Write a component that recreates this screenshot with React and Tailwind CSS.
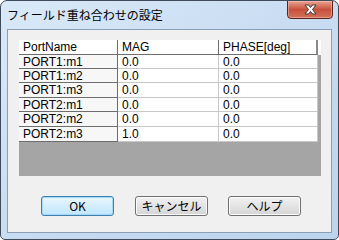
import React from "react";

const rows = [
  { name: "PORT1:m1", mag: "0.0", ph: "0.0", h: "h-[14px]" },
  { name: "PORT1:m2", mag: "0.0", ph: "0.0", h: "h-[14px]" },
  { name: "PORT1:m3", mag: "0.0", ph: "0.0", h: "h-[15px]" },
  { name: "PORT2:m1", mag: "0.0", ph: "0.0", h: "h-[14px]" },
  { name: "PORT2:m2", mag: "0.0", ph: "0.0", h: "h-[15px]" },
  { name: "PORT2:m3", mag: "1.0", ph: "0.0", h: "h-[15px]" },
];

const gridFont = { fontFamily: '"Liberation Sans", Arial, sans-serif' };

function Btn({ children, primary }) {
  return (
    <div
      className={
        "w-[73px] h-[20px] rounded-[3px] flex items-center justify-center text-[12px] text-black " +
        (primary
          ? "border border-[#3c7fb1] bg-gradient-to-b from-[#eaf6fd] to-[#bee6fd] shadow-[inset_0_0_0_1px_#a7d9f5]"
          : "border border-[#707070] bg-gradient-to-b from-[#f2f2f2] to-[#d5d5d5] shadow-[inset_0_0_0_1px_#fcfcfc]")
      }
      style={{ fontFamily: '"Noto Sans CJK JP", "Liberation Sans", sans-serif' }}
    >
      {children}
    </div>
  );
}

export default function App() {
  return (
    <div className="w-[339px] h-[240px] bg-white">
      <div className="w-[339px] h-[240px] rounded-t-[7px] rounded-b-[5px] border border-[#3f4b5a] bg-gradient-to-br from-[#d9e9f8] via-[#c8dcf2] to-[#bcd4ee] flex flex-col overflow-hidden">
        {/* title bar */}
        <div className="h-[28px] flex items-start shrink-0">
          <div
            className="pl-[6px] pt-[6px] text-[12px] leading-[16px] text-black"
            style={{ fontFamily: '"Noto Sans CJK JP", sans-serif' }}
          >
            フィールド重ね合わせの設定
          </div>
          <div className="ml-auto mr-[5px] w-[46px] h-[19px] -mt-px rounded-b-[4px] border border-[#5b2219] bg-gradient-to-b from-[#e8a493] via-[#c7503c] to-[#d2725a] flex items-center justify-center shadow-[inset_0_0_0_1px_rgba(255,200,190,0.5)]">
            <svg width="15" height="11" viewBox="0 0 15 11">
              <path
                d="M2 1 L5.5 1 L7.5 3.5 L9.5 1 L13 1 L9.5 5.5 L13 10 L9.5 10 L7.5 7.5 L5.5 10 L2 10 L5.5 5.5 Z"
                fill="#ffffff"
                stroke="#3a3a3a"
                strokeWidth="1"
                strokeLinejoin="round"
              />
            </svg>
          </div>
        </div>
        {/* client area */}
        <div className="mx-[6px] h-[204px] border border-[#8b9eb5] bg-[#f0f0f0] flex flex-col">
          <div className="ml-[11px] mt-[10px] w-[302px] h-[136px] bg-[#a5a5a5] flex flex-col text-[12px] leading-none text-black" style={gridFont}>
            {/* header */}
            <div className="flex h-[15px] bg-white">
              <div className="w-[99px] border-r border-r-[#6d6d6d] border-b border-b-[#6d6d6d] pl-[4px] flex items-center">PortName</div>
              <div className="w-[101px] border-r border-r-[#6d6d6d] border-b border-b-[#6d6d6d] pl-[4px] flex items-center">MAG</div>
              <div className="w-[99px] border-r-2 border-r-[#8a8a8a] border-b border-b-[#6d6d6d] pl-[4px] flex items-center">PHASE[deg]</div>
            </div>
            {rows.map((r) => (
              <div key={r.name} className={"flex " + r.h}>
                <div className="w-[99px] bg-[#f7f7f7] border-r border-r-[#6d6d6d] border-b border-b-[#6d6d6d] pl-[4px] flex items-center">{r.name}</div>
                <div className="w-[101px] bg-white border-r border-r-[#c8c8c8] border-b border-b-[#c8c8c8] pl-[4px] flex items-center">{r.mag}</div>
                <div className="w-[99px] bg-white border-r border-r-[#c8c8c8] border-b border-b-[#c8c8c8] pl-[4px] flex items-center">{r.ph}</div>
              </div>
            ))}
          </div>
          <div className="flex mt-[20px] ml-[33px]">
            <Btn primary>OK</Btn>
            <div className="ml-[21px]">
              <Btn>キャンセル</Btn>
            </div>
            <div className="ml-[20px]">
              <Btn>ヘルプ</Btn>
            </div>
          </div>
        </div>
      </div>
    </div>
  );
}
